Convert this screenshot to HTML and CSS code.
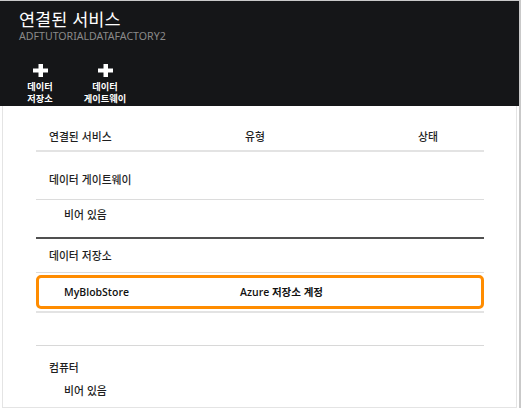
FILE: index.html
```html
<!DOCTYPE html>
<html lang="ko">
<head>
<meta charset="utf-8">
<link rel="stylesheet" href="styles.css">
</head>
<body>
<div class="frame">
  <header class="blade-header">
    <h1 class="title">연결된 서비스</h1>
    <div class="subtitle">ADFTUTORIALDATAFACTORY2</div>
    <div class="commands">
      <div class="cmd cmd-store">
        <svg class="plus" width="15" height="13" viewBox="0 0 15 13"><rect x="5.5" y="0" width="4.5" height="13" fill="#fff"/><rect x="0" y="4.5" width="15" height="4" fill="#fff"/></svg>
        <span class="cmd-label">데이터<br>저장소</span>
      </div>
      <div class="cmd cmd-gw">
        <svg class="plus" width="15" height="13" viewBox="0 0 15 13"><rect x="5.5" y="0" width="4.5" height="13" fill="#fff"/><rect x="0" y="4.5" width="15" height="4" fill="#fff"/></svg>
        <span class="cmd-label">데이터<br>게이트웨이</span>
      </div>
    </div>
  </header>
  <main class="content">
    <div class="table">
      <div class="row head-row">
        <span class="c1">연결된 서비스</span><span class="c2">유형</span><span class="c3">상태</span>
      </div>
      <div class="row group gw-group">데이터 게이트웨이</div>
      <div class="row empty gw-empty">비어 있음</div>
      <div class="row group store-group">데이터 저장소</div>
      <div class="selected-wrap">
        <div class="row selected">
          <span class="c1 name">MyBlobStore</span><span class="c2 name">Azure 저장소 계정</span><span class="c3"></span>
        </div>
      </div>
      <div class="row blank"></div>
      <div class="row group compute-group">컴퓨터</div>
      <div class="row empty compute-empty">비어 있음</div>
    </div>
  </main>
</div>
</body>
</html>
```
FILE: styles.css
```css
* { box-sizing: border-box; }
html, body { margin: 0; padding: 0; background: #ffffff; }
body {
  width: 522px;
  height: 411px;
  overflow: hidden;
  font-family: "Noto Sans", "Noto Sans CJK KR", sans-serif;
}
.frame {
  width: 521px;
  border-top: 1px solid #c9c9c9;
  border-right: 2px solid #c9c9c9;
}
.blade-header {
  background: #151618;
  height: 105px;
  padding: 7px 0 0 19px;
  color: #fff;
}
.title {
  margin: 0;
  font-family: "Noto Sans CJK KR", sans-serif;
  font-weight: 400;
  font-size: 17.5px;
  line-height: 21px;
  color: #ffffff;
}
.subtitle {
  font-size: 10.6px;
  line-height: 12px;
  color: #8a8a8a;
  margin-top: 1px;
}
.commands {
  display: flex;
  margin-top: 22px;
  margin-left: -1px;
}
.cmd {
  display: flex;
  flex-direction: column;
  align-items: center;
}
.cmd-store { width: 44px; }
.cmd-gw { width: 48px; margin-left: 19px; }
.plus { display: block; }
.cmd-label {
  margin-top: 3px;
  font-family: "Noto Sans CJK KR", sans-serif;
  font-weight: 700;
  font-size: 9.2px;
  line-height: 12px;
  text-align: center;
  color: #fff;
}
.content {
  margin: 0 2px 0 2px;
  height: 302px;
  border-left: 1px solid #e4e4e4;
  border-right: 1px solid #e4e4e4;
  border-bottom: 1px solid #e4e4e4;
}
.table {
  margin-left: 33px;
  width: 448px;
  font-family: "Noto Sans CJK KR", sans-serif;
  font-weight: 500;
  font-size: 10.8px;
  color: #1e1e1e;
}
.row {
  display: grid;
  grid-template-columns: 196px 172px 1fr;
  line-height: 16px;
  padding-left: 13px;
}
.head-row {
  height: 46px;
  padding-top: 22px;
  border-bottom: 2px solid #e3e3e3;
}
.c3 { padding-left: 1px; }
.group { display: block; }
.gw-group {
  height: 48px;
  padding-top: 19px;
  border-bottom: 1px solid #dcdcdc;
}
.empty { display: block; padding-left: 28px; }
.gw-empty {
  height: 39px;
  padding-top: 6px;
  border-bottom: 2px solid #505050;
}
.store-group {
  height: 34px;
  padding-top: 8px;
  border-bottom: 1px solid #dcdcdc;
}
.selected-wrap {
  padding: 2px 0;
  border-bottom: 2px solid #e3e3e3;
}
.selected {
  height: 34px;
  border: 3px solid #ff8c00;
  border-radius: 5px;
  padding-left: 25px;
  align-items: center;
  grid-template-columns: 176px 180px 1fr;
}
.name {
  font-family: "Open Sans", "Noto Sans CJK KR", sans-serif;
  font-weight: 600;
  font-size: 10.5px;
  color: #111;
}
.blank {
  height: 33px;
  border-bottom: 1px solid #d8d8d8;
}
.compute-group {
  height: 29px;
  padding-top: 13px;
}
.compute-empty {
  padding-top: 7px;
}
```
